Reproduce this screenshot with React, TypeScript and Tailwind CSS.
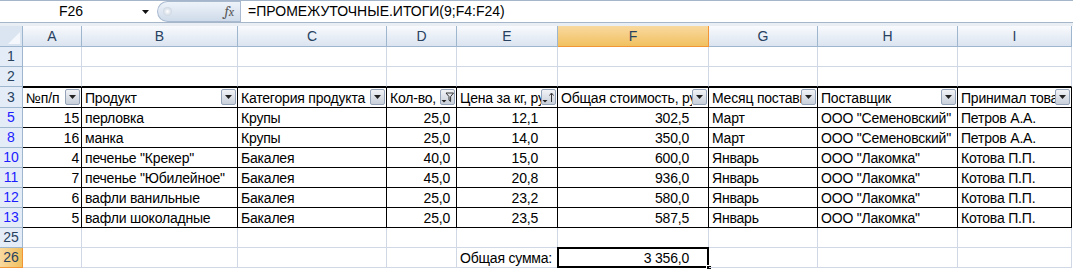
import React from "react";

type Btn = "dd" | "filter" | "sort";
type Cell = { t?: string; r?: boolean; btn?: Btn };
type Row = { n: string; kind: "plain" | "blue" | "active"; cells: Cell[]; table?: boolean; head?: boolean };

const COLS = ["w-[59px]", "w-[156px]", "w-[149px]", "w-[70px]", "w-[101px]", "w-[151px]", "w-[109px]", "w-[140px]", "w-[114px]"];
const LETTERS = ["A", "B", "C", "D", "E", "F", "G", "H", "I"];
// right padding of numeric columns (number format leaves a gap)
const NUM_PAD = ["pr-[2px]", "", "", "pr-[6px]", "pr-[19px]", "pr-[19px]", "", "", ""];

const head = ["№п/п", "Продукт", "Категория продукта", "Кол-во, кг", "Цена за кг, руб", "Общая стоимость, руб", "Месяц поставки", "Поставщик", "Принимал товар"];

const data: string[][] = [
  ["5", "15", "перловка", "Крупы", "25,0", "12,1", "302,5", "Март", 'ООО "Семеновский"', "Петров А.А."],
  ["8", "16", "манка", "Крупы", "25,0", "14,0", "350,0", "Март", 'ООО "Семеновский"', "Петров А.А."],
  ["10", "4", 'печенье "Крекер"', "Бакалея", "40,0", "15,0", "600,0", "Январь", 'ООО "Лакомка"', "Котова П.П."],
  ["11", "7", 'печенье "Юбилейное"', "Бакалея", "45,0", "20,8", "936,0", "Январь", 'ООО "Лакомка"', "Котова П.П."],
  ["12", "6", "вафли ванильные", "Бакалея", "25,0", "23,2", "580,0", "Январь", 'ООО "Лакомка"', "Котова П.П."],
  ["13", "5", "вафли шоколадные", "Бакалея", "25,0", "23,5", "587,5", "Январь", 'ООО "Лакомка"', "Котова П.П."],
];

const empty = (): Cell[] => LETTERS.map(() => ({}));

const rows: Row[] = [
  { n: "1", kind: "plain", cells: empty() },
  { n: "2", kind: "plain", cells: empty() },
  {
    n: "3",
    kind: "plain",
    table: true,
    head: true,
    cells: head.map((t, i) => ({ t, btn: i === 3 ? "filter" : i === 4 ? "sort" : "dd" })),
  },
  ...data.map((d) => ({
    n: d[0],
    kind: "blue" as const,
    table: true,
    cells: d.slice(1).map((t, i) => ({ t, r: [0, 3, 4, 5].includes(i) })),
  })),
  { n: "25", kind: "plain", cells: empty() },
  {
    n: "26",
    kind: "active",
    cells: LETTERS.map((_, i) =>
      i === 4 ? { t: "Общая сумма:" } : i === 5 ? { t: "3 356,0", r: true } : {}
    ),
  },
];

const FilterBtn = ({ type }: { type: Btn }) => (
  <div className="mb-[2px] mr-[1px] flex h-[16px] w-[15px] shrink-0 items-center justify-center rounded-[2px] border border-[#94a3b8] bg-linear-to-b from-[#f1f3f6] to-[#c9d0da]">
    {type === "dd" && (
      <svg width="7" height="4" viewBox="0 0 7 4">
        <path d="M0 0h7L3.5 4z" fill="#222" />
      </svg>
    )}
    {type === "filter" && (
      <svg width="13" height="11" viewBox="0 0 13 11">
        <path d="M0.5 8h5L3 10.5z" fill="#222" />
        <path d="M5 1h7.5L9.6 4.6V9.5L8 8.2V4.6z" fill="none" stroke="#333" strokeWidth="1" />
      </svg>
    )}
    {type === "sort" && (
      <svg width="13" height="11" viewBox="0 0 13 11">
        <path d="M0.5 8h5L3 10.5z" fill="#222" />
        <path d="M9.5 10V1.5M7.5 3.5l2-2.5 2 2.5" fill="none" stroke="#333" strokeWidth="1" />
      </svg>
    )}
  </div>
);

const rowHeaderCls = (kind: Row["kind"]) =>
  kind === "active"
    ? "bg-linear-to-r from-[#f9d99f] to-[#f1c15f] text-[#27415f] border-[#f29536]"
    : kind === "blue"
    ? "bg-[#e4ecf7] text-[#1c1cff] border-[#9eb6ce]"
    : "bg-[#e4ecf7] text-[#27415f] border-[#9eb6ce]";

export default function App() {
  return (
    <div className="h-[269px] w-[1073px] overflow-hidden bg-white text-[14px] text-black [font-family:'Liberation_Sans',Arial,sans-serif]">
      {/* formula bar */}
      <div className="flex h-[23px] border-t border-b border-[#a5b5ca] bg-white">
        <div className="flex w-[157px] items-center">
          <div className="flex-1 text-center">F26</div>
          <svg width="7" height="4" viewBox="0 0 7 4" className="mr-[8px]">
            <path d="M0 0h7L3.5 4z" fill="#111" />
          </svg>
        </div>
        <div className="flex w-[83px] items-center rounded-l-full border border-r-0 border-[#a9bad0] bg-linear-to-b from-[#eef3f9] to-[#cfdbea]">
          <div className="ml-[5px] h-[9px] w-[9px] rounded-full bg-radial from-white to-[#b9c6d6]" />
          <div className="ml-auto mr-[6px] font-serif text-[15px] italic text-[#5a5a5a]">
            f<span className="text-[12px]">x</span>
          </div>
        </div>
        <div className="flex flex-1 items-center border-l border-[#a9bad0] pl-[7px]">
          =ПРОМЕЖУТОЧНЫЕ.ИТОГИ(9;F4:F24)
        </div>
      </div>
      <div className="h-[3px] bg-[#e9eef5]" />

      {/* column headers */}
      <div className="flex h-[21px]">
        <div className="relative w-[23px] border-r border-b border-[#9eb6ce] bg-[#dbe5f1]">
          <svg width="12" height="12" viewBox="0 0 12 12" className="absolute right-[2px] bottom-[2px]">
            <path d="M12 0V12H0z" fill="#f4f7fb" />
          </svg>
        </div>
        {LETTERS.map((l, i) => (
          <div
            key={l}
            className={`${COLS[i]} flex items-center justify-center border-r border-b ${
              l === "F"
                ? "border-[#f29536] bg-linear-to-b from-[#f9d99f] to-[#f1c15f]"
                : "border-[#9eb6ce] bg-linear-to-b from-[#f8fafd] to-[#dbe4f0]"
            } text-[#27415f]`}
          >
            {l}
          </div>
        ))}
      </div>

      {rows.map((row, ri) => {
        const above = rows[ri + 1]?.head;
        return (
          <div key={row.n} className={`flex ${row.head ? "h-[21px]" : "h-[20px]"}`}>
            <div
              className={`flex w-[23px] items-center justify-center border-r border-b ${rowHeaderCls(row.kind)}`}
            >
              {row.n}
            </div>
            {row.cells.map((c, ci) => {
              const selected = row.n === "26" && ci === 5;
              return (
                <div
                  key={ci}
                  className={`${COLS[ci]} relative flex items-end border-r border-b ${
                    row.table ? "border-black" : "border-[#d0d7e5]"
                  } ${above ? "border-b-black" : ""} ${row.head ? "border-t border-t-black" : ""}`}
                >
                  {c.t && (
                    <span
                      className={`min-w-0 flex-1 overflow-hidden whitespace-nowrap pb-[1px] leading-[16px] tracking-[-0.2px] ${
                        c.r ? `text-right ${NUM_PAD[ci]}` : "pl-[3px]"
                      }`}
                    >
                      {c.t}
                    </span>
                  )}
                  {c.btn && <FilterBtn type={c.btn} />}
                  {selected && (
                    <>
                      <div className="pointer-events-none absolute -top-px -left-px -right-px -bottom-px border-2 border-black" />
                      <div className="absolute -right-[4px] -bottom-[4px] h-[6px] w-[6px] border border-white bg-black" />
                    </>
                  )}
                </div>
              );
            })}
          </div>
        );
      })}
    </div>
  );
}
